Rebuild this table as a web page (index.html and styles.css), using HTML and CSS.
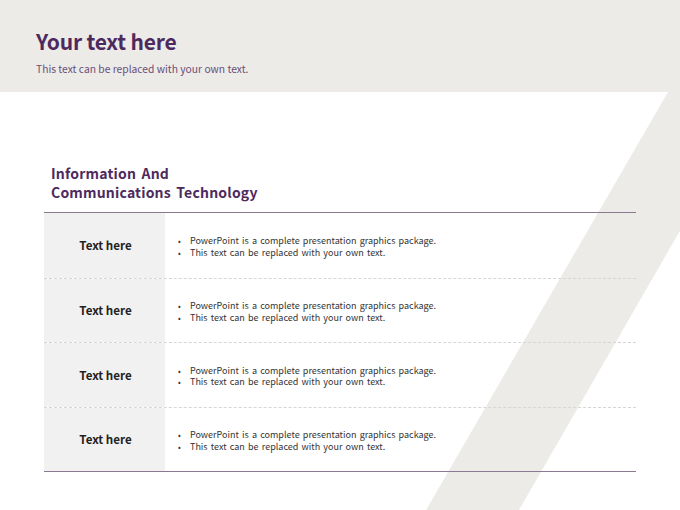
FILE: index.html
```html
<!DOCTYPE html>
<html>
<head>
<meta charset="utf-8">
<link rel="stylesheet" href="styles.css">
</head>
<body>
<div class="slide">
  <div class="band"></div>
  <header class="top">
    <h1 class="title">Your text here</h1>
    <p class="subtitle">This text can be replaced with your own text.</p>
  </header>
  <main class="content">
    <h2 class="heading">Information And<br>Communications Technology</h2>
    <div class="table">
      <div class="row">
        <div class="label">Text here</div>
        <ul class="desc">
          <li>PowerPoint is a complete presentation graphics package.</li>
          <li>This text can be replaced with your own text.</li>
        </ul>
      </div>
      <div class="row">
        <div class="label">Text here</div>
        <ul class="desc">
          <li>PowerPoint is a complete presentation graphics package.</li>
          <li>This text can be replaced with your own text.</li>
        </ul>
      </div>
      <div class="row">
        <div class="label">Text here</div>
        <ul class="desc">
          <li>PowerPoint is a complete presentation graphics package.</li>
          <li>This text can be replaced with your own text.</li>
        </ul>
      </div>
      <div class="row">
        <div class="label">Text here</div>
        <ul class="desc">
          <li>PowerPoint is a complete presentation graphics package.</li>
          <li>This text can be replaced with your own text.</li>
        </ul>
      </div>
    </div>
  </main>
</div>
</body>
</html>
```

FILE: styles.css
```css
* { box-sizing: border-box; }
html, body {
  margin: 0;
  padding: 0;
  background: #ffffff;
}
.slide {
  position: relative;
  width: 680px;
  height: 510px;
  overflow: hidden;
  font-family: "Noto Sans CJK KR", "Noto Sans", sans-serif;
}
.band {
  position: absolute;
  left: 0;
  top: 0;
  width: 680px;
  height: 510px;
  background: #edebe8;
  clip-path: polygon(668px 92px, 760px 92px, 519px 510px, 426px 510px);
}
.top {
  position: relative;
  height: 92px;
  background: #edebe8;
  padding: 27px 0 0 36px;
}
.title {
  margin: 0;
  font-size: 21px;
  line-height: 28px;
  font-weight: 700;
  color: #4d2a5e;
  letter-spacing: -0.2px;
}
.subtitle {
  margin: 7px 0 0 0;
  font-size: 10.3px;
  line-height: 14px;
  color: #6a4f78;
}
.content {
  position: relative;
  padding: 72px 44px 0 44px;
}
.heading {
  margin: 0 0 10px 7px;
  font-size: 14px;
  line-height: 19px;
  font-weight: 700;
  color: #4d2a5e;
  word-spacing: 2px;
  letter-spacing: 0.2px;
}
.table {
  width: 592px;
  border-top: 1px solid #8c7893;
  border-bottom: 1px solid #8c7893;
}
.row {
  display: flex;
  height: 64.5px;
}
.row + .row {
  border-top: 1px dashed #d6d6d6;
}
.label {
  width: 121px;
  flex: none;
  background: #f1f1f1;
  display: flex;
  align-items: center;
  justify-content: center;
  font-size: 11.6px;
  font-weight: 700;
  color: #222222;
  padding-left: 2px;
}
.desc {
  margin: 0;
  padding: 3px 0 0 13px;
  list-style: none;
  display: flex;
  flex-direction: column;
  justify-content: center;
  font-size: 9px;
  line-height: 11.5px;
  color: #333333;
  word-spacing: 1.2px;
}
.desc li::before {
  content: "\2022";
  display: inline-block;
  width: 12px;
  font-size: 8px;
}
```
